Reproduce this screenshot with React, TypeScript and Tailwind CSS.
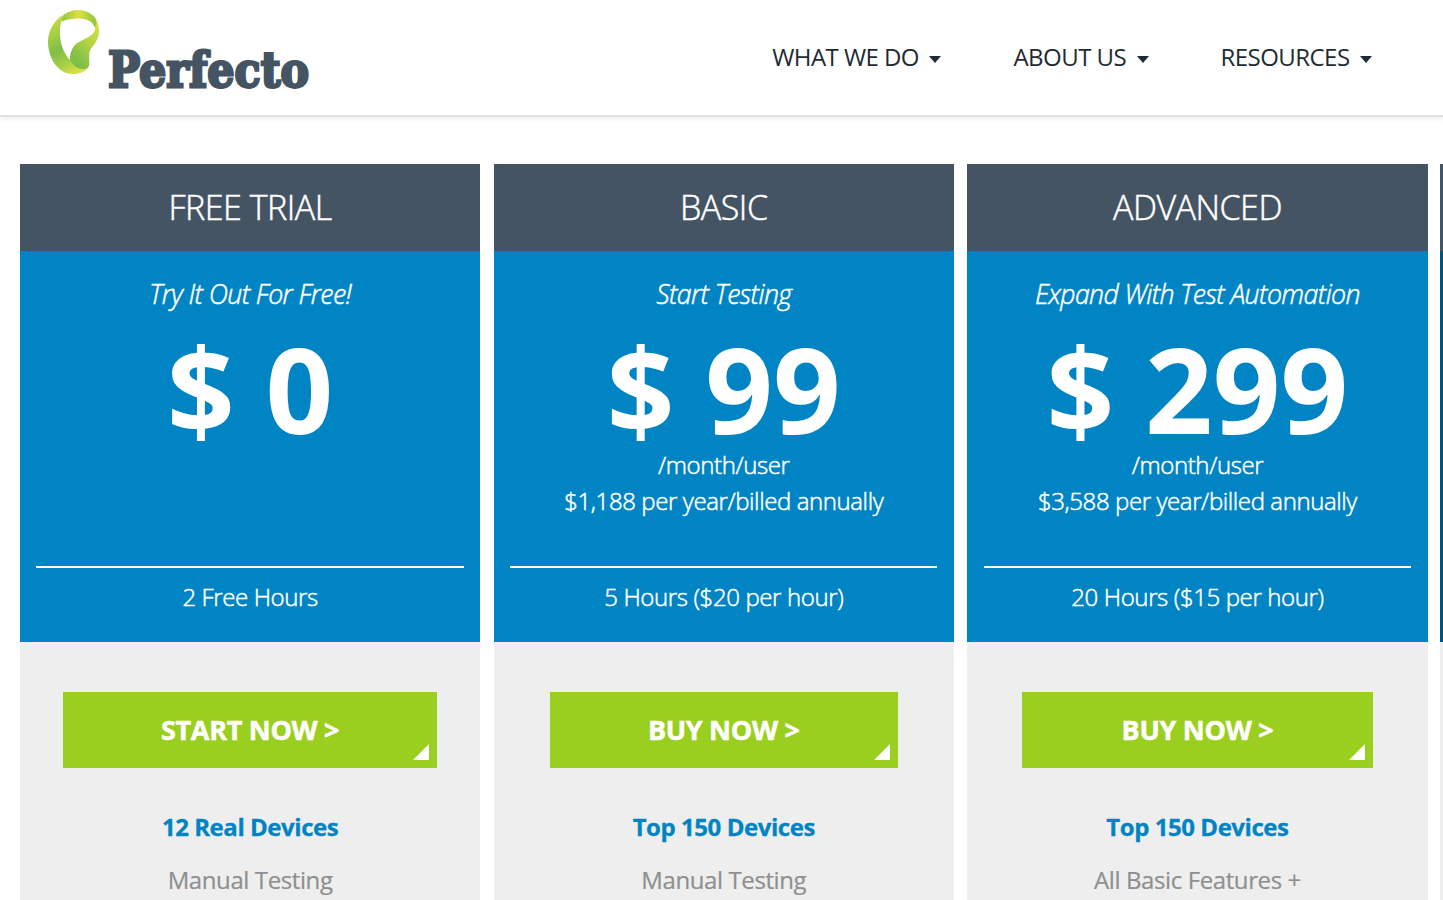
import clsx from 'clsx'

type Plan = {
  name: string
  tagline: string
  price: string
  billing: string[]
  hours: string
  button: string
  buttonClass: string
  devices: string
  feature: string
}

const plans: Plan[] = [
  {
    name: 'FREE TRIAL',
    tagline: 'Try It Out For Free!',
    price: '$ 0',
    billing: [],
    hours: '2 Free Hours',
    button: 'START NOW >',
    buttonClass: 'w-[374.8px]',
    devices: '12 Real Devices',
    feature: 'Manual Testing',
  },
  {
    name: 'BASIC',
    tagline: 'Start Testing',
    price: '$ 99',
    billing: ['/month/user', '$1,188 per year/billed annually'],
    hours: '5 Hours ($20 per hour)',
    button: 'BUY NOW >',
    buttonClass: 'w-[348px]',
    devices: 'Top 150 Devices',
    feature: 'Manual Testing',
  },
  {
    name: 'ADVANCED',
    tagline: 'Expand With Test Automation',
    price: '$ 299',
    billing: ['/month/user', '$3,588 per year/billed annually'],
    hours: '20 Hours ($15 per hour)',
    button: 'BUY NOW >',
    buttonClass: 'w-[350.4px]',
    devices: 'Top 150 Devices',
    feature: 'All Basic Features +',
  },
]

function Logo() {
  return (
    <svg width="280" height="112" viewBox="0 0 280 112" className="block overflow-visible">
      <defs>
        <linearGradient id="top" x1="0" y1="0" x2="1" y2="0">
          <stop offset="0" stopColor="#8fc63f" />
          <stop offset="0.5" stopColor="#dde045" />
          <stop offset="1" stopColor="#8fc63f" />
        </linearGradient>
        <linearGradient id="left" x1="0.3" y1="0" x2="0.7" y2="1">
          <stop offset="0" stopColor="#c9dc43" />
          <stop offset="0.5" stopColor="#80be49" />
          <stop offset="0.75" stopColor="#a5cf45" />
          <stop offset="1" stopColor="#dfe144" />
        </linearGradient>
        <linearGradient id="right" x1="0.9" y1="0" x2="0.3" y2="1">
          <stop offset="0" stopColor="#dfe144" />
          <stop offset="0.45" stopColor="#b4d543" />
          <stop offset="0.9" stopColor="#80be49" />
        </linearGradient>
      </defs>
      <path
        d="M16 14.5C7 19 0 30 0 41.500C0 58 10 74 24.500 74C32 74 38 71.500 40.500 67C33 70 27 67 22 60C15 52 11.500 42 12 31C12.200 26 13 22 13.500 21.500C14 18 15 16 16 14.500Z"
        fill="url(#left)"
      />
      <path
        d="M46.500 17C50 21 51.300 27 51 32C50.500 39 47 44 43 48.500C40.500 52 41.500 57 41.300 64C41.300 66 40 69 36 69C30 69.500 26 66 22 60.500C21.500 54 24 47.500 28 44C33 40 40 38.500 44.500 34C47 31.500 47.500 29 47 26Z"
        fill="url(#right)"
      />
      <path
        d="M13.500 21.500C14 18 15 16 16 14.500C20 11.500 25 10 31 10C37 10 43 13 46.500 17C49 20 48 25 47 28C45.500 22 39 18.700 31 18.500C24 18.500 18.500 19.500 13.500 21.500Z"
        fill="url(#top)"
      />
      <text
        x="60"
        y="87"
        textLength="201"
        lengthAdjust="spacingAndGlyphs"
        fill="#445463"
        stroke="#445463"
        strokeWidth="2.8"
        className="font-['DejaVu_Serif',serif] text-[48.5px] font-bold"
      >
        Perfecto
      </text>
    </svg>
  )
}

function NavItem({ label }: { label: string }) {
  return (
    <a className="flex items-center gap-[10.5px] whitespace-nowrap">
      {label}
      <span className="mt-[5px] border-x-[6.5px] border-t-[7px] border-x-transparent border-t-[#1f2a33]" />
    </a>
  )
}

function PlanCard({ plan }: { plan: Plan }) {
  return (
    <section className="flex h-[800px] w-[460.4px] shrink-0 flex-col bg-[#eeeeee] text-center text-2xl tracking-[-0.45px] text-white">
      <h2 className="h-[87px] bg-[#445463] text-[34px] leading-[87px] font-light tracking-[-0.5px] [-webkit-text-stroke:0.5px_white]">
        {plan.name}
      </h2>
      <div className="flex h-[391px] flex-col bg-[#0084c3] px-[16.5px] pt-[25px]">
        <p className="mb-[18px] text-[26.7px] leading-9 font-light tracking-[-0.6px] italic [-webkit-text-stroke:0.5px_white]">
          {plan.tagline}
        </p>
        <p className="text-[118.5px] leading-[116px] font-bold tracking-normal">{plan.price}</p>
        <div className="h-[120px] pt-px">
          {plan.billing.map((line) => (
            <p
              key={line}
              className="leading-[36.4px] font-light tracking-[-0.4px] [-webkit-text-stroke:0.5px_white]"
            >
              {line}
            </p>
          ))}
        </div>
        <p className="border-t-2 border-white pt-[11px] leading-9 font-light tracking-[-0.38px] [-webkit-text-stroke:0.5px_white]">
          {plan.hours}
        </p>
      </div>
      <button
        className={clsx(
          'relative mx-auto mt-[50px] h-[76px] shrink-0 bg-[#9bcf1f] text-[27px] font-bold tracking-[-0.3px] [-webkit-text-stroke:0.5px_white]',
          plan.buttonClass
        )}
      >
        {plan.button}
        <span className="absolute right-2 bottom-2 border-b-[16px] border-l-[16px] border-b-white border-l-transparent" />
      </button>
      <p className="mt-[41px] leading-9 font-bold text-[#0084c3] [-webkit-text-stroke:0.3px_#0084c3]">
        {plan.devices}
      </p>
      <p className="mt-[17px] leading-9 tracking-[-0.4px] text-[#8f8f8f] [-webkit-text-stroke:0.2px_#8f8f8f]">
        {plan.feature}
      </p>
    </section>
  )
}

export default function App() {
  return (
    <div className="h-[900px] w-[1443px] overflow-hidden bg-white font-['Open_Sans',sans-serif]">
      <header className="flex h-[117px] justify-between border-b-2 border-[#e0e0e0] pr-[71px] pl-12 shadow-[0_2px_4px_rgba(0,0,0,0.08)]">
        <Logo />
        <nav className="flex h-[114px] items-center gap-[72px] text-2xl tracking-[-0.55px] text-[#1f2a33]">
          <NavItem label="WHAT WE DO" />
          <NavItem label="ABOUT US" />
          <NavItem label="RESOURCES" />
        </nav>
      </header>
      <main className="flex gap-[13.3px] pt-[47px] pl-[19.9px]">
        {plans.map((plan) => (
          <PlanCard key={plan.name} plan={plan} />
        ))}
        {/* next plan, cut off by the window edge */}
        <section className="-ml-[1px] h-[800px] w-[460px] shrink-0 bg-[#eeeeee]">
          <div className="h-[87px] bg-[#445463]" />
          <div className="h-[391px] bg-[#005379]" />
        </section>
      </main>
    </div>
  )
}
